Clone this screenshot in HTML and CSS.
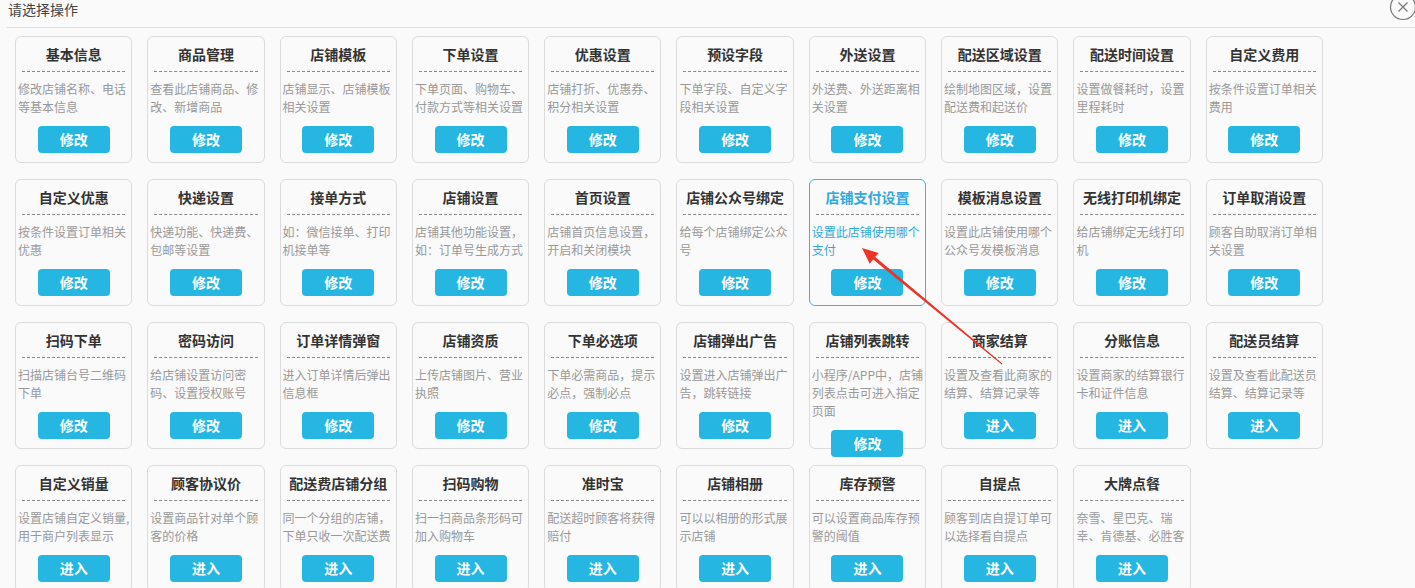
FILE: index.html
```html
<!DOCTYPE html>
<html lang="zh-CN">
  <head>
    <meta charset="UTF-8" />
    <meta name="viewport" content="width=device-width, initial-scale=1.0" />
    <title>请选择操作</title>
    <link rel="stylesheet" href="styles.css">
  </head>
  <body>
    <div class="dialog">
      <div class="dialog-head">
        <span class="dialog-title">请选择操作</span>
        <span class="dialog-close">
          <svg width="28" height="28" viewBox="0 0 28 28">
            <circle cx="14" cy="14" r="12.5" fill="none" stroke="#777" stroke-width="1.2" />
            <path d="M9.5 9.5 L18.5 18.5 M18.5 9.5 L9.5 18.5" stroke="#777" stroke-width="1.2" />
          </svg>
        </span>
      </div>

      <div class="op-grid">
        <!-- row 1 -->
        <div class="op-card"><h3 class="op-title">基本信息</h3><p class="op-desc">修改店铺名称、电话等基本信息</p><a class="op-btn">修改</a></div>
        <div class="op-card"><h3 class="op-title">商品管理</h3><p class="op-desc">查看此店铺商品、修改、新增商品</p><a class="op-btn">修改</a></div>
        <div class="op-card"><h3 class="op-title">店铺模板</h3><p class="op-desc">店铺显示、店铺模板相关设置</p><a class="op-btn">修改</a></div>
        <div class="op-card"><h3 class="op-title">下单设置</h3><p class="op-desc">下单页面、购物车、付款方式等相关设置</p><a class="op-btn">修改</a></div>
        <div class="op-card"><h3 class="op-title">优惠设置</h3><p class="op-desc">店铺打折、优惠券、积分相关设置</p><a class="op-btn">修改</a></div>
        <div class="op-card"><h3 class="op-title">预设字段</h3><p class="op-desc">下单字段、自定义字段相关设置</p><a class="op-btn">修改</a></div>
        <div class="op-card"><h3 class="op-title">外送设置</h3><p class="op-desc">外送费、外送距离相关设置</p><a class="op-btn">修改</a></div>
        <div class="op-card"><h3 class="op-title">配送区域设置</h3><p class="op-desc">绘制地图区域，设置配送费和起送价</p><a class="op-btn">修改</a></div>
        <div class="op-card"><h3 class="op-title">配送时间设置</h3><p class="op-desc">设置做餐耗时，设置里程耗时</p><a class="op-btn">修改</a></div>
        <div class="op-card"><h3 class="op-title">自定义费用</h3><p class="op-desc">按条件设置订单相关费用</p><a class="op-btn">修改</a></div>

        <!-- row 2 -->
        <div class="op-card"><h3 class="op-title">自定义优惠</h3><p class="op-desc">按条件设置订单相关优惠</p><a class="op-btn">修改</a></div>
        <div class="op-card"><h3 class="op-title">快递设置</h3><p class="op-desc">快递功能、快递费、包邮等设置</p><a class="op-btn">修改</a></div>
        <div class="op-card"><h3 class="op-title">接单方式</h3><p class="op-desc">如：微信接单、打印机接单等</p><a class="op-btn">修改</a></div>
        <div class="op-card"><h3 class="op-title">店铺设置</h3><p class="op-desc">店铺其他功能设置，如：订单号生成方式</p><a class="op-btn">修改</a></div>
        <div class="op-card"><h3 class="op-title">首页设置</h3><p class="op-desc">店铺首页信息设置，开启和关闭模块</p><a class="op-btn">修改</a></div>
        <div class="op-card"><h3 class="op-title">店铺公众号绑定</h3><p class="op-desc">给每个店铺绑定公众号</p><a class="op-btn">修改</a></div>
        <div class="op-card active"><h3 class="op-title">店铺支付设置</h3><p class="op-desc">设置此店铺使用哪个支付</p><a class="op-btn">修改</a></div>
        <div class="op-card"><h3 class="op-title">模板消息设置</h3><p class="op-desc">设置此店铺使用哪个公众号发模板消息</p><a class="op-btn">修改</a></div>
        <div class="op-card"><h3 class="op-title">无线打印机绑定</h3><p class="op-desc">给店铺绑定无线打印机</p><a class="op-btn">修改</a></div>
        <div class="op-card"><h3 class="op-title">订单取消设置</h3><p class="op-desc">顾客自助取消订单相关设置</p><a class="op-btn">修改</a></div>

        <!-- row 3 -->
        <div class="op-card"><h3 class="op-title">扫码下单</h3><p class="op-desc">扫描店铺台号二维码下单</p><a class="op-btn">修改</a></div>
        <div class="op-card"><h3 class="op-title">密码访问</h3><p class="op-desc">给店铺设置访问密码、设置授权账号</p><a class="op-btn">修改</a></div>
        <div class="op-card"><h3 class="op-title">订单详情弹窗</h3><p class="op-desc">进入订单详情后弹出信息框</p><a class="op-btn">修改</a></div>
        <div class="op-card"><h3 class="op-title">店铺资质</h3><p class="op-desc">上传店铺图片、营业执照</p><a class="op-btn">修改</a></div>
        <div class="op-card"><h3 class="op-title">下单必选项</h3><p class="op-desc">下单必需商品，提示必点，强制必点</p><a class="op-btn">修改</a></div>
        <div class="op-card"><h3 class="op-title">店铺弹出广告</h3><p class="op-desc">设置进入店铺弹出广告，跳转链接</p><a class="op-btn">修改</a></div>
        <div class="op-card"><h3 class="op-title">店铺列表跳转</h3><p class="op-desc">小程序/APP中，店铺列表点击可进入指定页面</p><a class="op-btn">修改</a></div>
        <div class="op-card"><h3 class="op-title">商家结算</h3><p class="op-desc">设置及查看此商家的结算、结算记录等</p><a class="op-btn">进入</a></div>
        <div class="op-card"><h3 class="op-title">分账信息</h3><p class="op-desc">设置商家的结算银行卡和证件信息</p><a class="op-btn">进入</a></div>
        <div class="op-card"><h3 class="op-title">配送员结算</h3><p class="op-desc">设置及查看此配送员结算、结算记录等</p><a class="op-btn">进入</a></div>

        <!-- row 4 -->
        <div class="op-card"><h3 class="op-title">自定义销量</h3><p class="op-desc">设置店铺自定义销量,用于商户列表显示</p><a class="op-btn">进入</a></div>
        <div class="op-card"><h3 class="op-title">顾客协议价</h3><p class="op-desc">设置商品针对单个顾客的价格</p><a class="op-btn">进入</a></div>
        <div class="op-card"><h3 class="op-title">配送费店铺分组</h3><p class="op-desc">同一个分组的店铺，下单只收一次配送费</p><a class="op-btn">进入</a></div>
        <div class="op-card"><h3 class="op-title">扫码购物</h3><p class="op-desc">扫一扫商品条形码可加入购物车</p><a class="op-btn">进入</a></div>
        <div class="op-card"><h3 class="op-title">准时宝</h3><p class="op-desc">配送超时顾客将获得赔付</p><a class="op-btn">进入</a></div>
        <div class="op-card"><h3 class="op-title">店铺相册</h3><p class="op-desc">可以以相册的形式展示店铺</p><a class="op-btn">进入</a></div>
        <div class="op-card"><h3 class="op-title">库存预警</h3><p class="op-desc">可以设置商品库存预警的阈值</p><a class="op-btn">进入</a></div>
        <div class="op-card"><h3 class="op-title">自提点</h3><p class="op-desc">顾客到店自提订单可以选择看自提点</p><a class="op-btn">进入</a></div>
        <div class="op-card"><h3 class="op-title">大牌点餐</h3><p class="op-desc">奈雪、星巴克、瑞幸、肯德基、必胜客</p><a class="op-btn">进入</a></div>
      </div>

      <!-- annotation arrow drawn over the cards -->
      <svg class="mark-arrow" width="1415" height="588" viewBox="0 0 1415 588">
        <polygon fill="#ef3326"
          points="862,248 878.7,252.9 875.2,257.1 1002.3,363.6 1001.7,364.4 873.2,259.4 869.7,263.7" />
      </svg>
    </div>
  </body>
</html>
```

FILE: styles.css
```css
* {
  box-sizing: border-box;
}

body {
  margin: 0;
  background: #fafafa;
  font-family: "Microsoft YaHei", "Noto Sans CJK SC", "Noto Sans", sans-serif;
  color: #333;
  overflow: hidden;
}

.dialog {
  position: relative;
  height: 588px;
}

.dialog-head {
  position: relative;
  height: 28px;
  margin-left: 7px;
  border-bottom: 1px solid #dedede;
}

.dialog-title {
  display: block;
  padding-left: 1px;
  font-size: 14px;
  line-height: 18px;
  color: #444;
}

.dialog-close {
  position: absolute;
  right: -2px;
  top: -7px;
  width: 28px;
  height: 28px;
}

.op-grid {
  display: grid;
  grid-template-columns: repeat(10, 117.3px);
  grid-auto-rows: 127px;
  column-gap: 15px;
  row-gap: 16px;
  padding: 8px 0 0 15px;
}

.op-card {
  border: 1px solid #dcdcdc;
  border-radius: 6px;
  background: #fafafa;
  text-align: center;
}

.op-title {
  margin: 0 6px;
  padding: 7px 0 7px;
  font-size: 14px;
  line-height: 20px;
  font-weight: bold;
  color: #333;
  white-space: nowrap;
  border-bottom: 1px dashed #8a8a8a;
}

.op-desc {
  margin: 0;
  padding: 8px 0 0 2px;
  min-height: 44px;
  font-size: 12px;
  line-height: 18px;
  color: #999;
  text-align: left;
}

.op-btn {
  display: block;
  width: 72px;
  height: 27px;
  margin: 10px auto 0;
  border-radius: 4px;
  background: #25b6e2;
  color: #fff;
  font-size: 14px;
  font-weight: bold;
  line-height: 27px;
  cursor: pointer;
}

.op-card.active {
  border-color: #3fb2e4;
}

.op-card.active .op-title {
  color: #2fa9e0;
}

.op-card.active .op-desc {
  color: #2fa9e0;
}

.mark-arrow {
  position: absolute;
  left: 0;
  top: 0;
  pointer-events: none;
}
```
